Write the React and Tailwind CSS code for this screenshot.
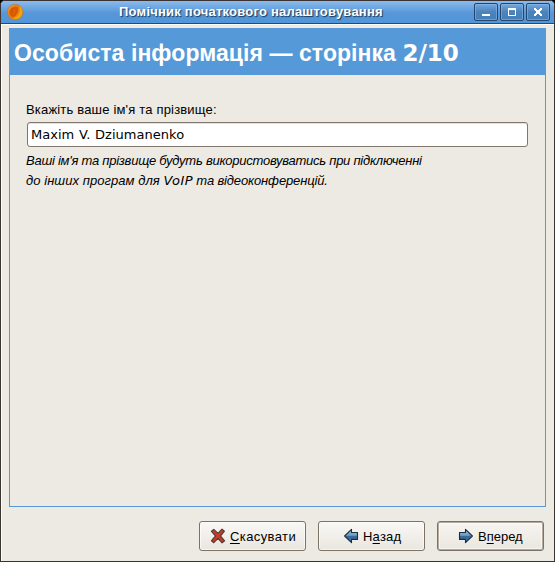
const sans = "font-['Liberation_Sans',sans-serif]";
const dejavu = "font-['DejaVu_Sans',sans-serif]";

function Logo() {
  return (
    <svg width="18" height="18" viewBox="0 0 18 18" className="shrink-0">
      <defs>
        <linearGradient id="sun" x1="0" y1="0" x2="1" y2="1">
          <stop offset="0" stopColor="#f39a2c" />
          <stop offset="0.5" stopColor="#e87a08" />
          <stop offset="1" stopColor="#f0a010" />
        </linearGradient>
      </defs>
      <circle cx="9.1" cy="9.1" r="7.800" fill="url(#sun)" stroke="#a9794a" strokeWidth="0.6" />
      <path d="M13.300 2.600c3.900 3 4.200 8.700.2 12-1.800 1.300-4.400 1.800-6.500 1.100 4.600-1.300 6.900-4.900 6.900-8.600 0-1.800-.2-3.100-.6-4.500z" fill="#f3a510" />
      <path d="M3.400 8.500c.6-3.500 4.500-5.600 8.200-4.600 1.400 3.300-.6 8.600-3.800 10.100C4.800 14 3 11.300 3.400 8.500z" fill="#d65a04" />
      <path d="M7 9c.2-1.900 1-3.400 2.500-3.600.3 2.500-.4 5.200-1.800 6.500-.7-.6-.9-1.700-.7-2.900z" fill="#dc6507" />
    </svg>
  );
}

function WindowButton({ children }) {
  return (
    <div className="h-[18px] w-6 rounded-[2px] border border-[#25456b] bg-linear-to-b from-[#73a9de] via-[#4c83bc] via-50% to-[#427fb9] shadow-[inset_0_0_0_1px_rgba(140,187,232,0.55)]">
      <svg width="22" height="16" viewBox="0 0 22 16" shapeRendering="crispEdges">
        {children}
      </svg>
    </div>
  );
}

function CancelIcon() {
  return (
    <svg width="18" height="18" viewBox="0 0 18 18" className="shrink-0">
      <path d="M2.500 4.300 4.800 2.400 9 6.400l4-4.200 2.400 2L11.400 9l4.200 4.800-2.500 2L9 11.400l-4.200 4.300-2.300-2L6.600 9z" fill="#c73d2b" stroke="#5c3a32" strokeWidth="1.200" strokeLinejoin="round" />
    </svg>
  );
}

function ArrowIcon({ flip }) {
  return (
    <svg width="16" height="16" viewBox="0 0 16 16" className={flip ? "shrink-0 -scale-x-100" : "shrink-0"}>
      <defs>
        <linearGradient id={flip ? "backFill" : "nextFill"} x1="0" y1="0" x2="0" y2="1">
          <stop offset="0" stopColor="#9bbcdc" />
          <stop offset="0.450" stopColor="#6c9cc9" />
          <stop offset="0.550" stopColor="#356695" />
          <stop offset="1" stopColor="#437cb3" />
        </linearGradient>
      </defs>
      <path d="M1.500 4.500h6V1.300L14.400 8l-6.900 6.600v-3.200h-6z" fill={flip ? "url(#backFill)" : "url(#nextFill)"} stroke="#1c2c3d" strokeWidth="1.100" strokeLinejoin="round" />
    </svg>
  );
}

function Mnemonic({ children }) {
  return <span className="underline decoration-black decoration-1 underline-offset-2 [text-decoration-skip-ink:none]">{children}</span>;
}

export default function App() {
  return (
    <div className="h-[562px] w-[555px] overflow-hidden bg-black">
      <div className="flex h-full flex-col rounded-t-[5px] border border-[#3b3331] bg-[#ede9e3]">
        <header className="flex h-[23px] shrink-0 items-center rounded-t-[4px] border-b border-[#294a70] bg-linear-to-b from-[#8abbed] via-[#5796da] via-55% to-[#4f97d8] pl-[5px] pr-[4px]">
          <Logo />
          <h1 className={`${sans} ml-[95px] w-[355px] whitespace-nowrap text-[13px] font-bold leading-[20px] tracking-[0.220px] text-white [text-shadow:1px_1px_1px_#1d3857]`}>
            Помічник початкового налаштовування
          </h1>
          <div className="ml-auto flex gap-[2px]">
            <WindowButton><path d="M7 10h8v2H7z" fill="#fff" /></WindowButton>
            <WindowButton><path d="M7 4h8v8H7zm1 2v5h6V6z" fill="#fff" fillRule="evenodd" /></WindowButton>
            <WindowButton><path d="M7 4h2v1h1v1h2V5h1V4h2v2h-1v1h-1v2h1v1h1v2h-2v-1h-1v-1h-2v1H9v1H7v-2h1V9h1V7H8V6H7z" fill="#fff" /></WindowButton>
          </div>
        </header>

        <div className="flex flex-1 flex-col border-l border-t border-white pl-[7px] pr-2 pt-[3px]">
          <main className="h-[479px] w-[537px] border border-t-0 border-[#5599d8]">
            <h2 className={`${sans} flex h-[47px] items-center whitespace-pre bg-[#5599d8] pl-1 pt-1 text-[23px] font-bold text-white`}>
              <span className="tracking-[0.070px]">Особиста інформація — сторінка </span>
              <span className={`${dejavu} pb-px text-[23px]`}>2/10</span>
            </h2>
            <div className={`${sans} px-4 pt-[25px] text-[13px] text-black`}>
              <label className="block h-[22px] leading-[20px] tracking-[0.180px]">Вкажіть ваше ім'я та прізвище:</label>
              <div className={`${dejavu} ml-px flex h-[25px] w-[501px] items-center rounded-[3px] border border-[#80766b] bg-white pl-[3px] text-[13px] tracking-[0.030px] [word-spacing:0.500px] shadow-[inset_0_1px_0_#e5e2dd]`}>
                Maxim V. Dziumanenko
              </div>
              <p className="whitespace-nowrap pt-[4px] italic leading-[20px]">
                <span className="block tracking-[-0.250px]">Ваші ім'я та прізвище будуть використовуватись при підключенні</span>
                <span className="block tracking-[-0.150px]"><span className="tracking-[0.060px]">до інших програм для </span><span className={`${dejavu} tracking-[0.400px]`}>VoIP</span> та відеоконференцій.</span>
              </p>
            </div>
          </main>

          <footer className={`${sans} flex gap-3 pl-[190px] pt-[14px] text-[13px] leading-[15px] text-black`}>
            <button className="flex h-[30px] w-[107px] items-center rounded-[3px] border border-[#7c7266] bg-linear-to-b from-[#f9f8f6] to-[#eae6df] pl-[9px] shadow-[inset_0_0_0_1px_#fff9]">
              <CancelIcon />
              <span className="ml-[3px] tracking-[0.400px]"><Mnemonic>С</Mnemonic>касувати</span>
            </button>
            <button className="flex h-[30px] w-[107px] items-center rounded-[3px] border border-[#7c7266] bg-linear-to-b from-[#f9f8f6] to-[#eae6df] pl-[24px] shadow-[inset_0_0_0_1px_#fff9]">
              <ArrowIcon flip />
              <span className="ml-[4px] tracking-[0.200px]">Н<Mnemonic>а</Mnemonic>зад</span>
            </button>
            <button className="flex h-[30px] w-[107px] items-center rounded-[3px] border border-[#7c7266] bg-linear-to-b from-[#f7f5f2] to-[#eae6df] pl-[20px] shadow-[inset_0_0_0_1px_#b5aa9e,inset_0_0_0_2px_#fff8]">
              <ArrowIcon />
              <span className="ml-[4px]">В<Mnemonic>п</Mnemonic>еред</span>
            </button>
          </footer>
        </div>
      </div>
    </div>
  );
}
